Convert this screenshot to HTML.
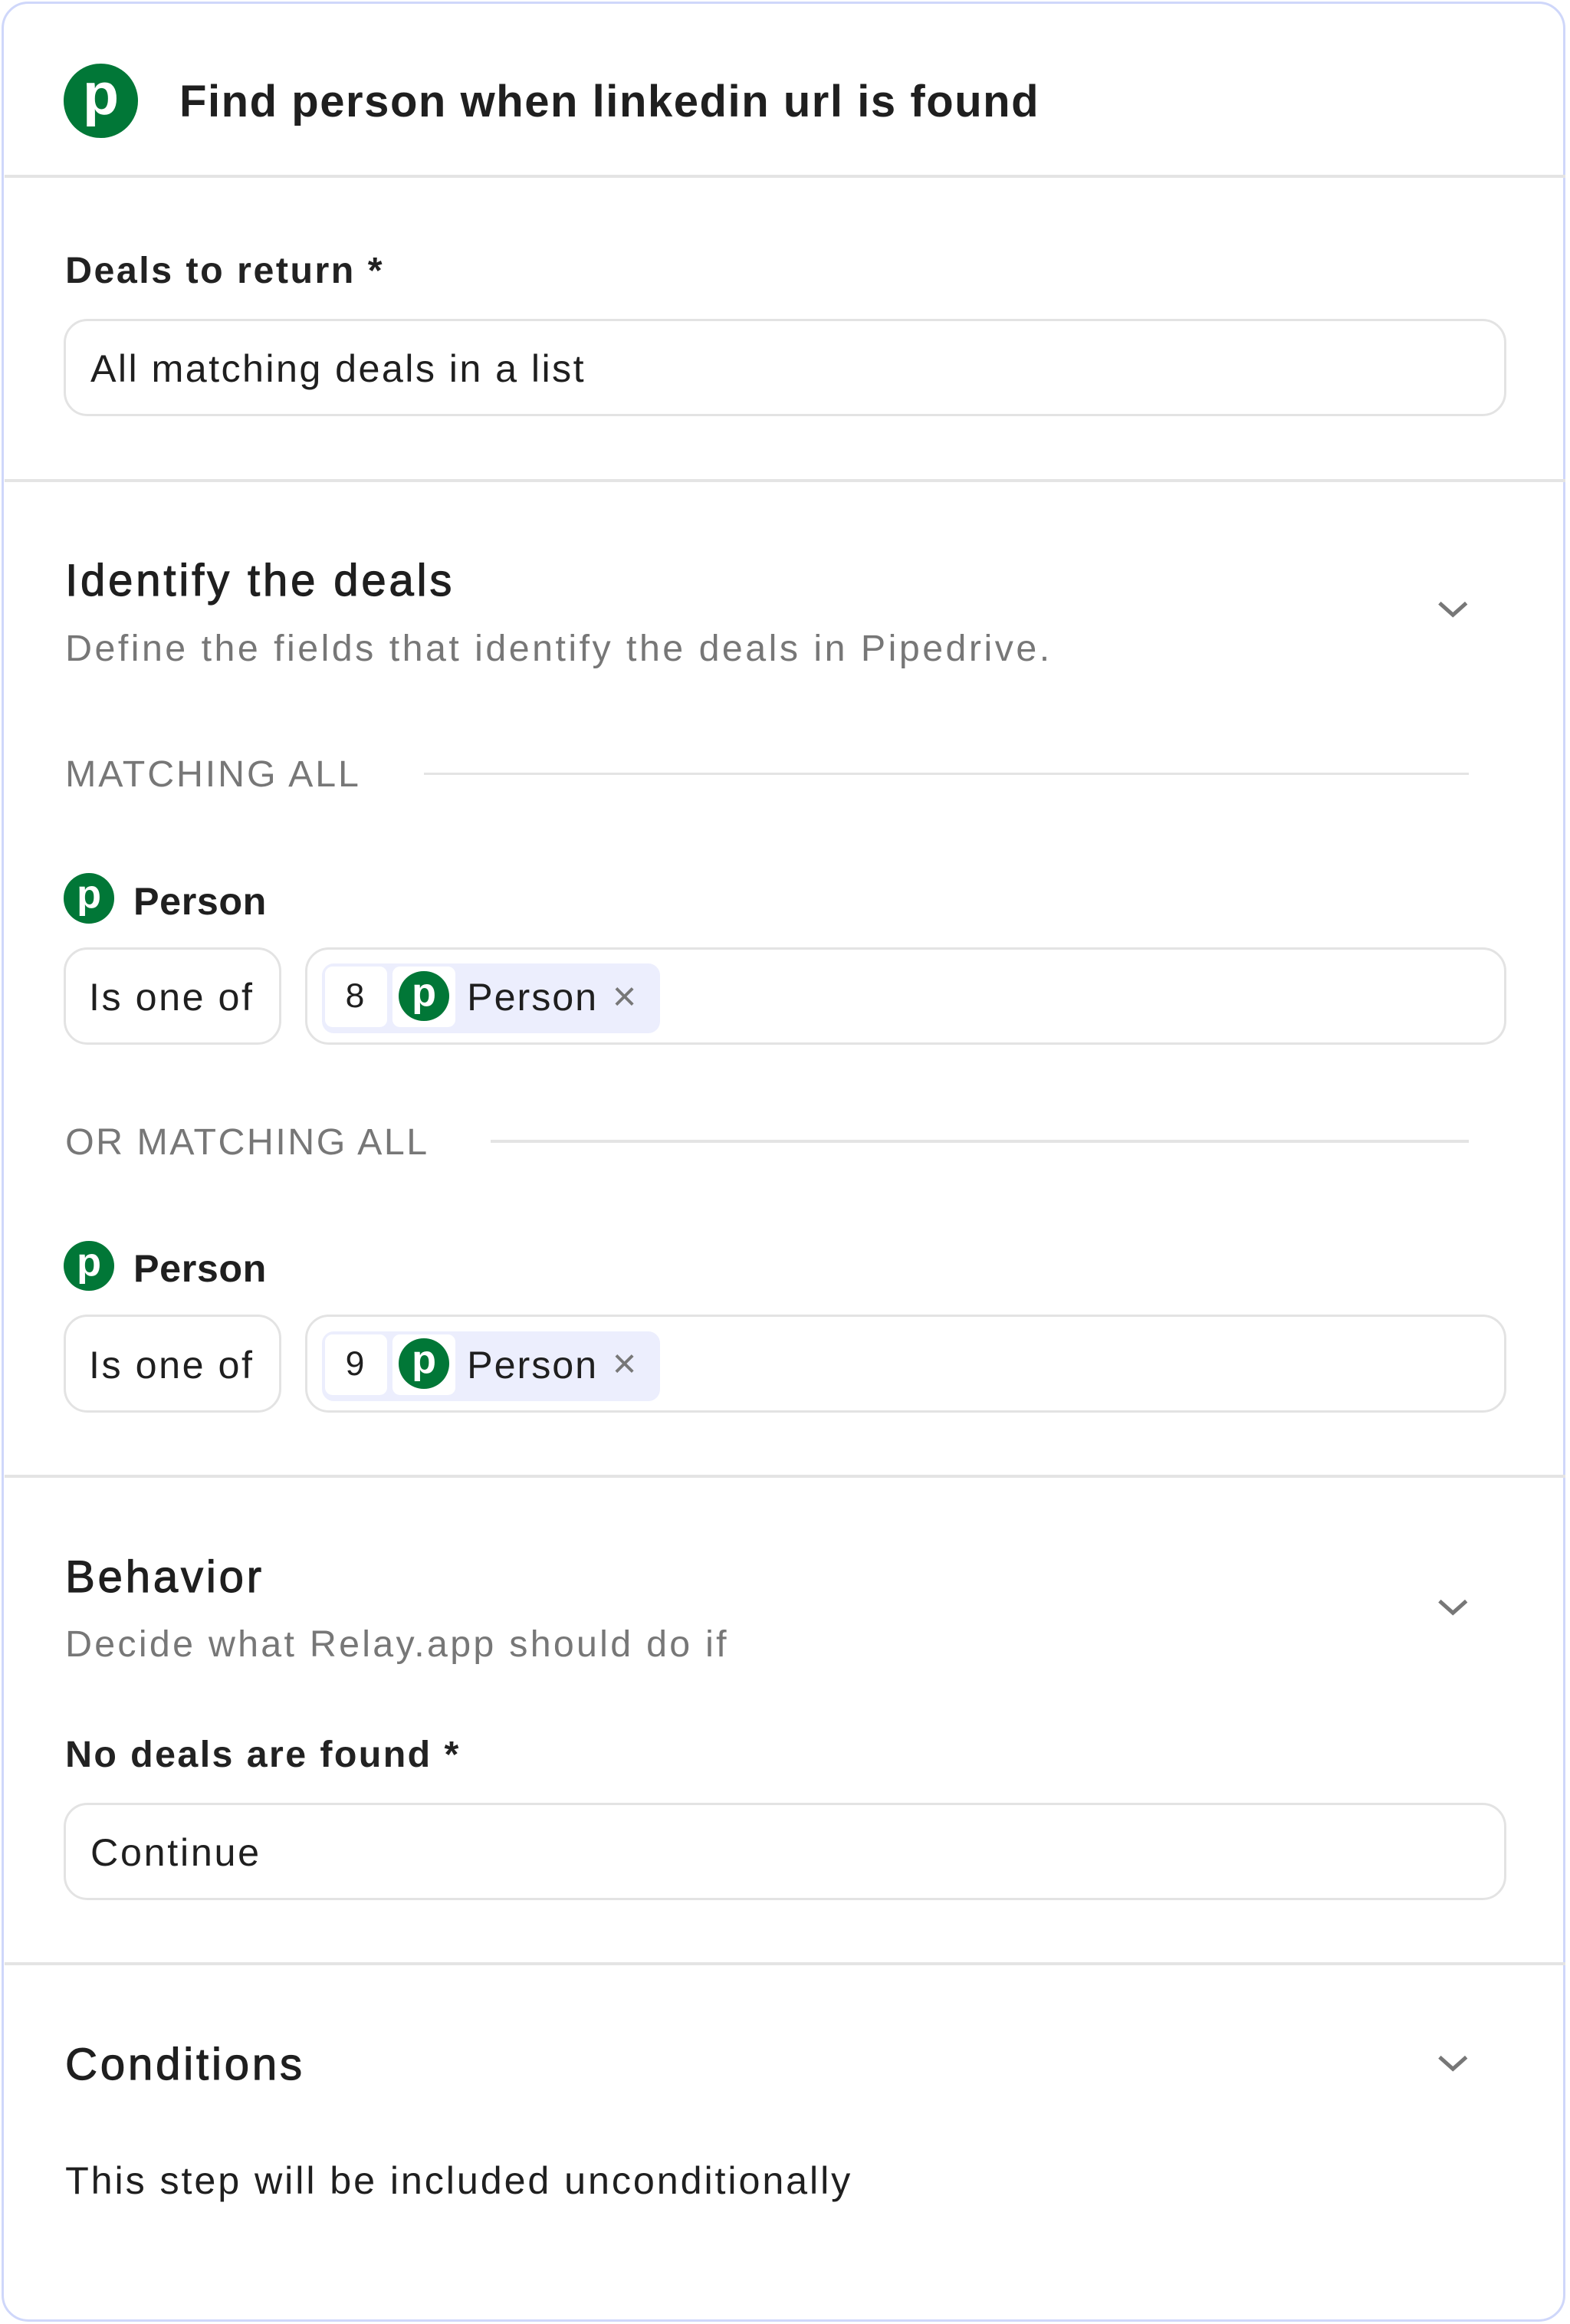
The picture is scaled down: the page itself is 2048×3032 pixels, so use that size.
<!DOCTYPE html>
<html><head><meta charset="utf-8"><style>
html,body{margin:0;padding:0;background:#fff;width:2048px;height:3032px;overflow:hidden}
#w{zoom:1.93390;width:1059px;height:1568px;position:relative;font-family:"Liberation Sans",sans-serif;color:#1f1f1f}
.a{position:absolute}
.card{left:1px;top:1px;width:1052px;height:1562px;border:2px solid #cfd7fa;border-radius:18px}
.hr{left:3px;width:1053px;height:2px;background:#e4e4e4}
.t{position:absolute;white-space:nowrap;line-height:1;letter-spacing:1.4px}
.h{-webkit-text-stroke:0.6px #1f1f1f;letter-spacing:2px}
.box{position:absolute;border:2px solid #e3e3e3;border-radius:16px;box-sizing:border-box}
.grey{color:#777}
.chev{position:absolute;width:22px;height:14px}
.logo{position:absolute;border-radius:50%;background:#017737;color:#fff;font-weight:bold;text-align:center;font-family:"Liberation Sans",sans-serif;letter-spacing:0}
</style></head><body><div id="w">
<div class="a card"></div>
<div class="logo" style="left:43px;top:43px;width:50px;height:50px;font-size:40px;line-height:42px">p</div>
<div class="t" style="left:121px;top:54px;font-size:30px;font-weight:bold;letter-spacing:0.8px">Find person when linkedin url is found</div>
<div class="a hr" style="top:118px"></div>
<div class="t" style="left:44px;top:170px;font-size:25px;font-weight:bold;color:#222;letter-spacing:1.3px">Deals to return *</div>
<div class="box" style="left:43px;top:215px;width:973px;height:66px"></div>
<div class="t" style="left:61px;top:236px;font-size:26px;letter-spacing:1.25px">All matching deals in a list</div>
<div class="a hr" style="top:323px"></div>
<div class="t h" style="left:44px;top:377px;font-size:30px">Identify the deals</div>
<div class="t grey" style="left:44px;top:425px;font-size:25px;letter-spacing:1.8px">Define the fields that identify the deals in Pipedrive.</div>
<svg class="chev" style="left:969px;top:404px" viewBox="0 0 22 14"><path d="M2 3 L11 11 L20 3" fill="none" stroke="#777" stroke-width="2.6"/></svg>
<div class="t grey" style="left:44px;top:510px;font-size:25px;letter-spacing:1.5px">MATCHING ALL</div>
<div class="a" style="left:286px;top:521px;width:705px;height:2px;background:#e4e4e4"></div>
<div class="logo" style="left:43px;top:589px;width:34px;height:34px;font-size:27px;line-height:29px">p</div>
<div class="t" style="left:90px;top:595px;font-size:26px;font-weight:bold;letter-spacing:0.3px">Person</div>
<div class="box" style="left:43px;top:639px;width:147px;height:66px"></div>
<div class="t" style="left:60px;top:660px;font-size:26px;letter-spacing:1.3px">Is one of</div>
<div class="box" style="left:206px;top:639px;width:810px;height:66px"></div>
<div class="a" style="left:217px;top:650px;width:228px;height:47px;background:#eceefd;border-radius:8px"></div>
<div class="a" style="left:219px;top:652px;width:42px;height:41px;background:#fff;border-radius:5px"></div>
<div class="t" style="left:233px;top:661px;font-size:23px">8</div>
<div class="a" style="left:265px;top:652px;width:42px;height:41px;background:#fff;border-radius:5px"></div>
<div class="logo" style="left:269px;top:655px;width:34px;height:34px;font-size:27px;line-height:29px">p</div>
<div class="t" style="left:315px;top:660px;font-size:26px;letter-spacing:1px">Person</div>
<div class="t" style="left:413px;top:658px;font-size:28px;color:#777">×</div>
<div class="t grey" style="left:44px;top:758px;font-size:25px;letter-spacing:1.3px">OR MATCHING ALL</div>
<div class="a" style="left:331px;top:769px;width:660px;height:2px;background:#e4e4e4"></div>
<div class="logo" style="left:43px;top:837px;width:34px;height:34px;font-size:27px;line-height:29px">p</div>
<div class="t" style="left:90px;top:843px;font-size:26px;font-weight:bold;letter-spacing:0.3px">Person</div>
<div class="box" style="left:43px;top:887px;width:147px;height:66px"></div>
<div class="t" style="left:60px;top:908px;font-size:26px;letter-spacing:1.3px">Is one of</div>
<div class="box" style="left:206px;top:887px;width:810px;height:66px"></div>
<div class="a" style="left:217px;top:898px;width:228px;height:47px;background:#eceefd;border-radius:8px"></div>
<div class="a" style="left:219px;top:900px;width:42px;height:41px;background:#fff;border-radius:5px"></div>
<div class="t" style="left:233px;top:909px;font-size:23px">9</div>
<div class="a" style="left:265px;top:900px;width:42px;height:41px;background:#fff;border-radius:5px"></div>
<div class="logo" style="left:269px;top:903px;width:34px;height:34px;font-size:27px;line-height:29px">p</div>
<div class="t" style="left:315px;top:908px;font-size:26px;letter-spacing:1px">Person</div>
<div class="t" style="left:413px;top:906px;font-size:28px;color:#777">×</div>
<div class="a hr" style="top:995px"></div>
<div class="t h" style="left:44px;top:1049px;font-size:30px">Behavior</div>
<div class="t grey" style="left:44px;top:1097px;font-size:25px;letter-spacing:1.7px">Decide what Relay.app should do if</div>
<svg class="chev" style="left:969px;top:1077px" viewBox="0 0 22 14"><path d="M2 3 L11 11 L20 3" fill="none" stroke="#777" stroke-width="2.6"/></svg>
<div class="t" style="left:44px;top:1171px;font-size:25px;font-weight:bold;color:#222;letter-spacing:1.25px">No deals are found *</div>
<div class="box" style="left:43px;top:1216px;width:973px;height:66px"></div>
<div class="t" style="left:61px;top:1237px;font-size:26px;letter-spacing:1.4px">Continue</div>
<div class="a hr" style="top:1324px"></div>
<div class="t h" style="left:44px;top:1378px;font-size:30px">Conditions</div>
<svg class="chev" style="left:969px;top:1385px" viewBox="0 0 22 14"><path d="M2 3 L11 11 L20 3" fill="none" stroke="#777" stroke-width="2.6"/></svg>
<div class="t" style="left:44px;top:1458px;font-size:26px;letter-spacing:1.5px">This step will be included unconditionally</div>
</div></body></html>
